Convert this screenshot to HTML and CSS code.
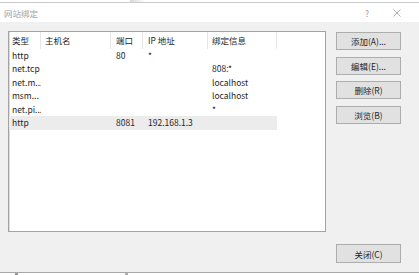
FILE: index.html
```html
<!DOCTYPE html>
<html lang="zh-CN">
<head>
    <meta charset="UTF-8">
    <title>网站绑定</title>
    <link rel="stylesheet" href="styles.css">
</head>
<body>
    <div class="backdrop-top"></div>
    <div class="dialog">
        <div class="titlebar">
            <span class="title">网站绑定</span>
            <div class="caption-buttons">
                <span class="help">?</span>
                <svg class="close-x" width="8" height="8" viewBox="0 0 8 8">
                    <path d="M0.5 0.5 L7.5 7.5 M7.5 0.5 L0.5 7.5" stroke="#9a9a9a" stroke-width="0.8" fill="none"/>
                </svg>
            </div>
        </div>

        <div class="content">
            <div class="listview">
                <div class="row header">
                    <div class="cell c-type">类型</div>
                    <div class="cell c-host">主机名</div>
                    <div class="cell c-port">端口</div>
                    <div class="cell c-ip">IP 地址</div>
                    <div class="cell c-info">绑定信息</div>
                </div>
                <div class="row">
                    <div class="cell c-type">http</div>
                    <div class="cell c-host"></div>
                    <div class="cell c-port">80</div>
                    <div class="cell c-ip">*</div>
                    <div class="cell c-info"></div>
                </div>
                <div class="row">
                    <div class="cell c-type">net.tcp</div>
                    <div class="cell c-host"></div>
                    <div class="cell c-port"></div>
                    <div class="cell c-ip"></div>
                    <div class="cell c-info">808:*</div>
                </div>
                <div class="row">
                    <div class="cell c-type">net.m...</div>
                    <div class="cell c-host"></div>
                    <div class="cell c-port"></div>
                    <div class="cell c-ip"></div>
                    <div class="cell c-info">localhost</div>
                </div>
                <div class="row">
                    <div class="cell c-type">msm...</div>
                    <div class="cell c-host"></div>
                    <div class="cell c-port"></div>
                    <div class="cell c-ip"></div>
                    <div class="cell c-info">localhost</div>
                </div>
                <div class="row">
                    <div class="cell c-type">net.pi...</div>
                    <div class="cell c-host"></div>
                    <div class="cell c-port"></div>
                    <div class="cell c-ip"></div>
                    <div class="cell c-info">*</div>
                </div>
                <div class="row selected">
                    <div class="cell c-type">http</div>
                    <div class="cell c-host"></div>
                    <div class="cell c-port">8081</div>
                    <div class="cell c-ip">192.168.1.3</div>
                    <div class="cell c-info"></div>
                </div>
            </div>

            <div class="side-buttons">
                <button>添加(A)...</button>
                <button>编辑(E)...</button>
                <button>删除(R)</button>
                <button>浏览(B)</button>
            </div>

            <div class="footer">
                <button>关闭(C)</button>
            </div>
        </div>
    </div>
    <div class="backdrop-bottom"></div>
</body>
</html>
```

FILE: styles.css
```css
html, body {
    margin: 0;
    padding: 0;
}

body {
    width: 419px;
    height: 275px;
    overflow: hidden;
    font-family: "Noto Sans CJK SC", "Noto Sans", sans-serif;
    font-size: 8.5px;
    color: #262626;
    background-color: #ffffff;
}

.backdrop-top {
    height: 2px;
    border-bottom: 1px solid #c9c9c9;
    background: linear-gradient(90deg, #ffffff 0, #ffffff 130px, #d8d8d8 130px, #ffffff 145px, #ffffff 100%);
}

.dialog {
    background-color: #f0f0f0;
    border-bottom: 1px solid #a8a8a8;
}

.titlebar {
    height: 19px;
    background-color: #ffffff;
    display: flex;
    align-items: center;
    justify-content: space-between;
    padding-left: 4px;
}

.title {
    color: #a3a3a3;
    font-size: 8.5px;
}

.caption-buttons {
    display: flex;
    align-items: center;
}

.help {
    color: #9a9a9a;
    font-size: 8.5px;
    margin-right: 24px;
}

.close-x {
    display: block;
    margin-right: 18px;
}

.content {
    display: grid;
    grid-template-columns: 318px 65px;
    column-gap: 10px;
    padding: 9px 0 9px 8px;
}

.listview {
    height: 199px;
    background-color: #ffffff;
    border: 1px solid #a3a3a3;
    box-shadow: inset 1px 0 0 #dcdcdc;
}

.row {
    display: flex;
    width: 268px;
    height: 13.5px;
    line-height: 13.5px;
    white-space: nowrap;
}

.row.header {
    height: 16.5px;
    line-height: 16.5px;
}

.row.header .cell {
    border-right: 1px solid #e5e5e5;
}

.row.selected {
    background-color: #ececec;
}

.cell {
    box-sizing: border-box;
    padding-left: 4px;
    overflow: hidden;
}

.c-type {
    width: 32px;
    padding-left: 3px;
}

.c-host {
    width: 70px;
}

.c-port {
    width: 32px;
    padding-left: 5px;
}

.c-ip {
    width: 65px;
    padding-left: 5px;
}

.c-info {
    width: 69px;
}

.side-buttons {
    display: flex;
    flex-direction: column;
    gap: 6.5px;
    padding-top: 1px;
}

button {
    box-sizing: border-box;
    width: 65px;
    height: 18px;
    padding: 0;
    font-family: "Noto Sans CJK SC", "Noto Sans", sans-serif;
    font-size: 8.5px;
    color: #262626;
    background-color: #e1e1e1;
    border: 1px solid #adadad;
}

.footer {
    grid-column: 2;
    padding-top: 12px;
}

.footer button {
    height: 19px;
}

.backdrop-bottom {
    height: 2px;
    background: linear-gradient(90deg, #ffffff 0, #ffffff 15px, #9a9a9a 15px, #9a9a9a 18px, #ffffff 18px, #ffffff 125px, #b0b0b0 125px, #b0b0b0 128px, #ffffff 128px);
}
```
